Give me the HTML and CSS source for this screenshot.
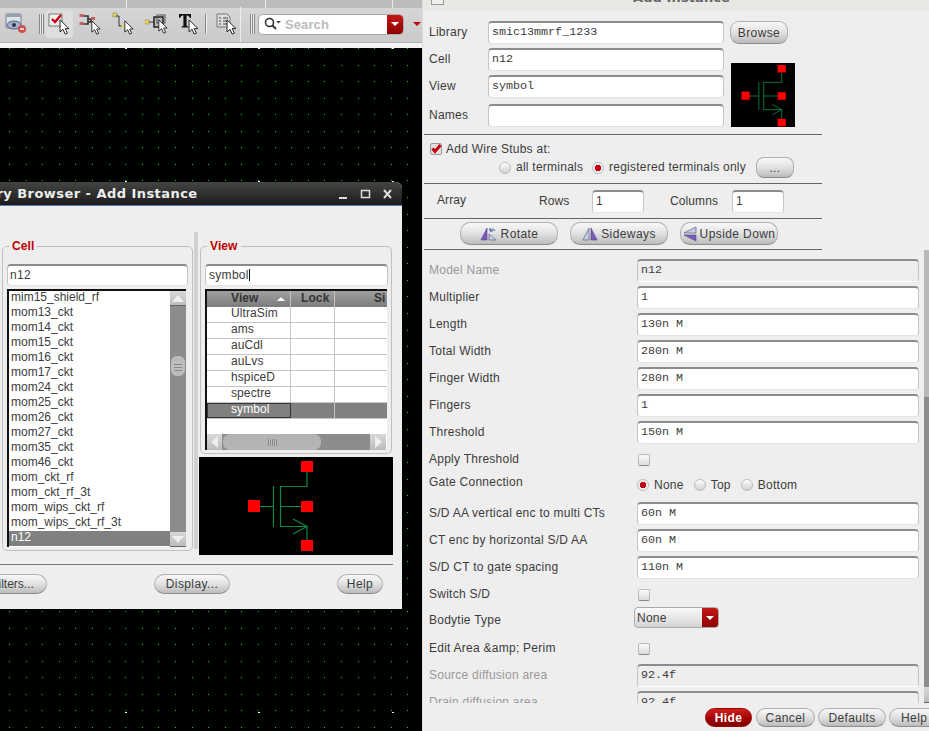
FILE: index.html
```html
<!DOCTYPE html>
<html lang="en">
<head>
  <meta charset="UTF-8" />
  <meta name="viewport" content="width=device-width, initial-scale=1.0" />
  <title>Add Instance</title>
  <link rel="stylesheet" href="styles.css">
</head>
<body>

  <svg class="defs" width="0" height="0">
    <symbol id="cursor" viewBox="0 0 12 18">
      <path d="M1 1V14.5L4.3 11.6L6.8 17L9.2 16L6.8 10.8H11Z" fill="#fff" stroke="#111" stroke-width="1"/>
    </symbol>
    <symbol id="mos" viewBox="0 0 66 91">
      <g fill="none" stroke="#0a8a48" stroke-width="1.2">
        <path d="M25.5 25V66M32.5 25V66"/>
        <path d="M32.5 25.5H59V11"/>
        <path d="M12 45.5H25.5M32.5 45.5H53"/>
        <path d="M32.5 65.5H59V79"/>
        <path d="M45 58L59 65.5L45 73"/>
      </g>
      <g fill="#f00">
        <rect x="53" y="0" width="12" height="11"/>
        <rect x="0" y="39" width="12" height="12"/>
        <rect x="53" y="40" width="12" height="11"/>
        <rect x="53" y="79" width="12" height="11"/>
      </g>
    </symbol>
    <symbol id="redcheck" viewBox="0 0 12 12">
      <rect x="0.5" y="0.5" width="11" height="11" rx="1.5" fill="#e0e0e0" stroke="#999"/>
      <path d="M2.500 5.500L5 8.500L10.500 2" fill="none" stroke="#cc0010" stroke-width="3"/>
    </symbol>
  </svg>

  <div class="toolbar-tops">
    <span class="top-seg"></span><span class="top-seg"></span><span class="top-seg"></span>
  </div>

  <div class="toolbar">
    <div class="tool tool-first">
      <svg width="22" height="22" viewBox="0 0 22 22">
        <rect x="1" y="1" width="15" height="14" rx="1" fill="#dfe3ea" stroke="#7b7f88"/>
        <rect x="1" y="1" width="15" height="3" fill="#9aa0ab"/>
        <ellipse cx="9" cy="12" rx="7" ry="4" fill="#9fb0d0" stroke="#56637d"/>
        <circle cx="9" cy="12" r="2" fill="#334"/>
        <circle cx="17" cy="16" r="4" fill="#d05050"/>
        <path d="M15 16H19" stroke="#fff" stroke-width="1.4"/>
      </svg>
    </div>
    <span class="grip grip-a"></span>
    <div class="tool tool-on">
      <svg class="tool-svg" width="24" height="24" viewBox="0 0 24 24">
        <rect x="1" y="2" width="13" height="12" fill="#eee" stroke="#777"/>
        <path d="M4 7L7 10L13 3" fill="none" stroke="#d00010" stroke-width="2.4"/>
        <use href="#cursor" x="11" y="7" width="11" height="16"/>
      </svg>
    </div>
    <div class="tool">
      <svg class="tool-svg" width="24" height="24" viewBox="0 0 24 24">
        <path d="M2 4H9V12H2M9 7H12V10H9" fill="none" stroke="#333" stroke-width="1.6"/>
        <rect x="0.5" y="2" width="4" height="3" fill="#c86060"/>
        <rect x="0.5" y="10" width="4" height="3" fill="#c86060"/>
        <rect x="12" y="5" width="4" height="3" fill="#c86060"/>
        <use href="#cursor" x="12" y="8" width="10" height="15"/>
      </svg>
    </div>
    <div class="tool">
      <svg class="tool-svg" width="24" height="24" viewBox="0 0 24 24">
        <rect x="1" y="1" width="4" height="4" fill="#e8d84a" stroke="#777" stroke-width=".5"/>
        <path d="M4 4H7V14H11" fill="none" stroke="#333"/>
        <rect x="9.500" y="13" width="3" height="3" fill="#e8d84a"/>
        <use href="#cursor" x="12" y="8" width="10" height="15"/>
      </svg>
    </div>
    <div class="tool">
      <svg class="tool-svg" width="24" height="24" viewBox="0 0 24 24">
        <rect x="0" y="8" width="4" height="4" fill="#e8d84a" stroke="#777" stroke-width=".5"/>
        <path d="M4 10H9" stroke="#333"/>
        <rect x="9" y="5" width="9" height="10" fill="#bbb" stroke="#222" stroke-width="1.5"/>
        <rect x="12" y="3" width="8" height="8" fill="none" stroke="#555"/>
        <use href="#cursor" x="13" y="7" width="10" height="15"/>
      </svg>
    </div>
    <div class="tool">
      <svg class="tool-svg" width="24" height="24" viewBox="0 0 24 24">
        <path d="M1 2H13V6H12C11 4 10 3.600 8.600 3.600V13C8.600 14 9 14.400 10.400 14.400V15.500H3.600V14.400C5 14.400 5.400 14 5.400 13V3.600C4 3.600 3 4 2 6H1Z" fill="#111"/>
        <use href="#cursor" x="10" y="7" width="11" height="16"/>
      </svg>
    </div>
    <span class="vsep"></span>
    <div class="tool">
      <svg class="tool-svg" width="24" height="24" viewBox="0 0 24 24">
        <path d="M1 2H11L14 5V15H1Z" fill="#ddd" stroke="#777"/>
        <path d="M3 6H5M7 6H12M3 9H5M7 9H12M3 12H5M7 12H12" stroke="#444"/>
        <use href="#cursor" x="10" y="7" width="11" height="16"/>
      </svg>
    </div>
    <span class="group-edge"></span>
    <span class="grip grip-b"></span>
    <div class="search">
      <svg width="18" height="14" viewBox="0 0 18 14">
        <circle cx="5.500" cy="5.500" r="4" fill="none" stroke="#333" stroke-width="1.6"/>
        <path d="M8.500 8.500L12 12" stroke="#333" stroke-width="2"/>
        <path d="M12 4H17L14.500 6.500Z" fill="#444"/>
      </svg>
      <span class="search-text">Search</span>
      <span class="search-drop"><i class="tri"></i></span>
    </div>
    <i class="tri tri-red"></i>
  </div>

  <div class="desktop">
    <svg class="grid-dots" width="929" height="683" shape-rendering="crispEdges">
      <path class="dots-minor" d="M0 .5H929M0 17.500H929M0 33.500H929M0 50.500H929M0 66.500H929M0 83.500H929M0 99.500H929M0 116.500H929M0 132.500H929M0 149.500H929M0 166.500H929M0 182.500H929M0 199.500H929M0 215.500H929M0 232.500H929M0 248.500H929M0 265.500H929M0 282.500H929M0 298.500H929M0 315.500H929M0 331.500H929M0 348.500H929M0 364.500H929M0 381.500H929M0 397.500H929M0 414.500H929M0 431.500H929M0 447.500H929M0 464.500H929M0 480.500H929M0 497.500H929M0 513.500H929M0 530.500H929M0 546.500H929M0 563.500H929M0 580.500H929M0 596.500H929M0 613.500H929M0 629.500H929M0 646.500H929M0 662.500H929M0 679.500H929"/>
      <path class="dots-major" d="M0 .5H929M0 133.500H929M0 664.500H929"/>
    </svg>
  </div>

  <!-- library browser window -->
  <div class="win browser">
    <div class="browser-title">
      <span class="browser-name">Library Browser - Add Instance</span>
      <svg class="win-controls" width="54" height="12" viewBox="0 0 54 12">
        <path d="M0 10H8" stroke="#ddd" stroke-width="2"/>
        <rect x="22.500" y="2.500" width="8" height="7" fill="none" stroke="#ddd" stroke-width="1.5"/>
        <path d="M45 2L52 10M52 2L45 10" stroke="#ddd" stroke-width="2"/>
      </svg>
    </div>
    <div class="panes">
      <fieldset class="group cell-group">
        <legend>Cell</legend>
        <input class="field sans" type="text" value="n12">
        <div class="listbox">
          <ul class="cell-list">
            <li>mim15_shield_rf</li>
            <li>mom13_ckt</li>
            <li>mom14_ckt</li>
            <li>mom15_ckt</li>
            <li>mom16_ckt</li>
            <li>mom17_ckt</li>
            <li>mom24_ckt</li>
            <li>mom25_ckt</li>
            <li>mom26_ckt</li>
            <li>mom27_ckt</li>
            <li>mom35_ckt</li>
            <li>mom46_ckt</li>
            <li>mom_ckt_rf</li>
            <li>mom_ckt_rf_3t</li>
            <li>mom_wips_ckt_rf</li>
            <li>mom_wips_ckt_rf_3t</li>
            <li class="sel">n12</li>
            <li>n12_3t</li>
          </ul>
          <div class="list-scroll">
            <span class="arrow-btn"><i class="tri tri-up"></i></span>
            <span class="v-thumb"></span>
            <span class="arrow-btn arrow-end"><i class="tri tri-down"></i></span>
          </div>
        </div>
      </fieldset>
      <span class="sash"></span>
      <div class="view-col">
        <fieldset class="group view-group">
          <legend>View</legend>
          <div class="field sans view-field">symbol<i class="caret"></i></div>
          <div class="tablebox">
            <div class="tr th">
              <span class="c1">View<i class="tri tri-sort"></i></span><span class="c2">Lock</span><span class="c3">Si</span>
            </div>
            <div class="tr"><span class="c1">UltraSim</span><span class="c2"></span><span class="c3"></span></div>
            <div class="tr"><span class="c1">ams</span><span class="c2"></span><span class="c3"></span></div>
            <div class="tr"><span class="c1">auCdl</span><span class="c2"></span><span class="c3"></span></div>
            <div class="tr"><span class="c1">auLvs</span><span class="c2"></span><span class="c3"></span></div>
            <div class="tr"><span class="c1">hspiceD</span><span class="c2"></span><span class="c3"></span></div>
            <div class="tr"><span class="c1">spectre</span><span class="c2"></span><span class="c3"></span></div>
            <div class="tr tr-sel"><span class="c1">symbol</span><span class="c2"></span><span class="c3"></span></div>
            <div class="table-fill"></div>
            <div class="h-scroll">
              <span class="arrow-btn"><i class="tri tri-left"></i></span>
              <span class="h-thumb"></span>
              <span class="arrow-btn arrow-last"><i class="tri tri-right"></i></span>
            </div>
          </div>
        </fieldset>
        <div class="preview">
          <svg width="66" height="91"><use href="#mos"/></svg>
        </div>
      </div>
    </div>
    <div class="browser-foot">
      <button class="btn btn-filters">Filters...</button>
      <button class="btn btn-display">Display...</button>
      <button class="btn btn-help">Help</button>
    </div>
  </div>

  <!-- add instance form -->
  <div class="win add">
    <div class="add-title">
      <span class="add-icon"></span>
      <span class="add-name">Add Instance</span>
    </div>

    <div class="sect top-sect">
      <label class="lbl">Library</label>
      <input class="field mono" type="text" value="smic13mmrf_1233">
      <button class="btn btn-browse">Browse</button>
      <label class="lbl">Cell</label>
      <input class="field mono" type="text" value="n12">
      <div class="mini-preview">
        <svg width="46" height="62"><use href="#mos"/></svg>
      </div>
      <label class="lbl">View</label>
      <input class="field mono" type="text" value="symbol">
      <label class="lbl lbl-names">Names</label>
      <input class="field mono field-names" type="text">
    </div>

    <div class="sect stubs-sect">
      <div class="stubs-head">
        <svg class="chk" width="12" height="12"><use href="#redcheck"/></svg>
        <span>Add Wire Stubs at:</span>
      </div>
      <div class="stubs-opts">
        <span class="radio"></span><span class="opt-all">all terminals</span>
        <span class="radio radio-on"></span><span class="opt-reg">registered terminals only</span>
        <button class="btn btn-more">...</button>
      </div>
    </div>

    <div class="sect array-sect">
      <span class="array-name">Array</span>
      <span class="rows-lbl">Rows</span>
      <input class="field sans field-num" type="text" value="1">
      <span class="cols-lbl">Columns</span>
      <input class="field sans field-num" type="text" value="1">
    </div>

    <div class="sect flip-sect">
      <button class="btn btn-flip">
        <svg width="18" height="14" viewBox="0 0 18 14"><path d="M7 1V13H1Z" fill="#7a5cb8" stroke="#54408c" stroke-width=".6"/><path d="M9 13V7L16 13Z" fill="#c8d0e4" stroke="#66708c" stroke-width=".8"/><path d="M10 4C11 1.500 14 1.500 15 4M10 1V4H13" fill="none" stroke="#2a5a9a"/></svg>
        Rotate
      </button>
      <button class="btn btn-flip">
        <svg width="16" height="14" viewBox="0 0 16 14"><path d="M7 1V13H1Z" fill="#c8d0e4" stroke="#66708c" stroke-width=".8"/><path d="M9 1V13H15Z" fill="#7a5cb8" stroke="#54408c" stroke-width=".6"/></svg>
        Sideways
      </button>
      <button class="btn btn-flip">
        <svg width="14" height="16" viewBox="0 0 14 16"><path d="M1 7H13V1Z" fill="#c8d0e4" stroke="#66708c" stroke-width=".8"/><path d="M1 9H13V15Z" fill="#7a5cb8" stroke="#54408c" stroke-width=".6"/></svg>
        Upside Down
      </button>
    </div>

    <div class="form-wrap">
      <div class="form">
        <label class="lbl off">Model Name</label><input class="field mono field-off" type="text" value="n12">
        <label class="lbl">Multiplier</label><input class="field mono" type="text" value="1">
        <label class="lbl">Length</label><input class="field mono" type="text" value="130n M">
        <label class="lbl">Total Width</label><input class="field mono" type="text" value="280n M">
        <label class="lbl">Finger Width</label><input class="field mono" type="text" value="280n M">
        <label class="lbl">Fingers</label><input class="field mono" type="text" value="1">
        <label class="lbl">Threshold</label><input class="field mono" type="text" value="150n M">
        <label class="lbl">Apply Threshold</label><div class="cell-ctl"><span class="box"></span></div>
        <label class="lbl lbl-up">Gate Connection</label>
        <div class="cell-ctl gate-opts">
          <span class="radio radio-on"></span><span>None</span>
          <span class="radio"></span><span>Top</span>
          <span class="radio"></span><span>Bottom</span>
        </div>
        <label class="lbl">S/D AA vertical enc to multi CTs</label><input class="field mono" type="text" value="60n M">
        <label class="lbl">CT enc by horizontal S/D AA</label><input class="field mono" type="text" value="60n M">
        <label class="lbl">S/D CT to gate spacing</label><input class="field mono" type="text" value="110n M">
        <label class="lbl">Switch S/D</label><div class="cell-ctl"><span class="box"></span></div>
        <label class="lbl lbl-body">Bodytie Type</label>
        <div class="select"><span>None</span><span class="select-drop"><i class="tri"></i></span></div>
        <label class="lbl">Edit Area &amp;amp; Perim</label><div class="cell-ctl"><span class="box"></span></div>
        <label class="lbl off">Source diffusion area</label><input class="field mono field-off" type="text" value="92.4f">
        <label class="lbl off">Drain diffusion area</label><input class="field mono field-off" type="text" value="92.4f">
      </div>
      <div class="v-scroll">
        <span class="v-scroll-thumb"></span>
        <span class="arrow-btn"></span>
      </div>
    </div>

    <div class="add-foot">
      <button class="btn btn-hide">Hide</button>
      <button class="btn btn-cancel">Cancel</button>
      <button class="btn btn-defaults">Defaults</button>
      <button class="btn btn-help2">Help</button>
    </div>
  </div>

</body>
</html>
```

FILE: styles.css
```css
* {
  box-sizing: border-box;
}

body {
  margin: 0;
  width: 929px;
  height: 731px;
  overflow: hidden;
  position: relative;
  display: flex;
  flex-direction: column;
  background-color: #000;
  font-family: "Liberation Sans", Arial, sans-serif;
  font-size: 12px;
  letter-spacing: 0.1px;
  color: #3c3c3c;
}

.defs {
  position: absolute;
}

/* top toolbar */
.toolbar-tops {
  height: 8px;
  display: flex;
  background-color: #bcbcbc;
  flex-shrink: 0;
}

.top-seg {
  width: 127px;
  border-right: 1px solid #e8e8e8;
}

.top-seg:nth-child(2) {
  width: 139px;
}

.toolbar {
  height: 35px;
  flex-shrink: 0;
  display: flex;
  align-items: center;
  background: linear-gradient(#d6d6d6, #cacaca);
  padding-left: 5px;
  padding-bottom: 2px;
  position: relative;
  border-bottom: 1px solid #b0b0b0;
  box-shadow: 0 5px 0 #f4f4f4;
  z-index: 1;
}

.tool {
  width: 28px;
  height: 28px;
  display: flex;
  align-items: center;
  justify-content: center;
  margin-right: 5px;
}

.tool-svg {
  margin-left: -2px;
}

.tool-first {
  width: 22px;
  margin-right: 0;
}

.tool-on {
  background-color: #dedede;
  border-radius: 4px;
}

.tool-on .tool-svg {
  margin-left: 2px;
}

.grip {
  width: 5px;
  height: 20px;
  border-left: 1px solid #888;
  border-right: 1px solid #888;
  margin-left: 12px;
  margin-right: 1px;
  background: linear-gradient(to right, #eee 0 1px, #888 1px 2px, #eee 2px);
}

.grip-a {
  margin-right: 1px;
}

.vsep {
  width: 2px;
  height: 20px;
  margin: 0 8px 0 -5px;
  background: linear-gradient(to right, #888 1px, #eee 1px);
}

.group-edge {
  width: 1px;
  height: 35px;
  margin-left: -8px;
  background-color: #eee;
}

.grip-b {
  margin-left: 9px;
  margin-right: 3px;
}

.search {
  width: 146px;
  height: 21px;
  display: flex;
  align-items: center;
  padding-left: 5px;
  background-color: #fff;
  border: 1px solid #aaa;
  border-radius: 5px;
  overflow: hidden;
}

.search-text {
  margin-left: 3px;
  font-size: 13px;
  font-weight: bold;
  color: #bbb;
  flex: 1;
}

.search-drop,
.select-drop {
  width: 16px;
  height: 100%;
  display: flex;
  align-items: center;
  justify-content: center;
  background: linear-gradient(#c41818, #8e0000);
}

.tri {
  width: 0;
  height: 0;
  display: block;
  border-left: 4px solid transparent;
  border-right: 4px solid transparent;
  border-top: 4px solid #fff;
}

.tri-red {
  margin-left: 9px;
  border-top-color: #c00010;
}

.tri-up {
  border-top: 0;
  border-bottom: 7px solid #eee;
  border-left-width: 6px;
  border-right-width: 6px;
}

.tri-down {
  border-top: 7px solid #eee;
  border-left-width: 6px;
  border-right-width: 6px;
}

.tri-left {
  border-top: 6px solid transparent;
  border-bottom: 6px solid transparent;
  border-left: 0;
  border-right: 7px solid #eee;
}

.tri-right {
  border-top: 6px solid transparent;
  border-bottom: 6px solid transparent;
  border-right: 0;
  border-left: 7px solid #eee;
}

.tri-sort {
  display: inline-block;
  position: absolute;
  left: 70px;
  top: 6px;
  border-top: 0;
  border-bottom: 4px solid #fff;
}

/* desktop */
.desktop {
  flex: 1;
  position: relative;
  margin-top: 5px;
}

.grid-dots {
  position: absolute;
  left: 0;
  top: 0;
}

.dots-minor {
  fill: none;
  stroke: #00e000;
  stroke-dasharray: 1 15.6;
  stroke-dashoffset: -9;
}

.dots-major {
  fill: none;
  stroke: #fff;
  stroke-dasharray: 2 131.3;
  stroke-dashoffset: -125;
}

.win {
  position: absolute;
  z-index: 2;
  background-color: #eee;
}

/* library browser */
.browser {
  left: 0;
  top: 182px;
  width: 402px;
  height: 427px;
  border-top-right-radius: 6px;
  overflow: hidden;
}

.browser-title {
  height: 24px;
  display: flex;
  align-items: center;
  justify-content: space-between;
  padding-right: 9px;
  background: linear-gradient(#444, #1c1c1c);
  border-bottom: 1px solid #5a7ca8;
  color: #eee;
  font-family: "DejaVu Sans", sans-serif;
  font-weight: bold;
  font-size: 13px;
  letter-spacing: 0.45px;
  white-space: nowrap;
}

.browser-name {
  margin-left: -43px;
}

.panes {
  display: flex;
  padding: 33px 9px 0 2px;
  height: 350px;
}

.group {
  margin: 0;
  padding: 0 4px;
  border: 1px solid #c0c0c0;
  border-radius: 5px;
  min-width: 0;
}

.group legend {
  padding: 0 3px;
  margin-left: 2px;
  color: #c00000;
  font-weight: bold;
  line-height: 14px;
}

.cell-group {
  width: 191px;
  height: 312px;
  margin-top: 0;
  flex-shrink: 0;
}

.field {
  display: block;
  height: 23px;
  width: 100%;
  padding: 0 3px 2px;
  background-color: #fff;
  border: 1px solid #e4e4e4;
  border-top: 2px solid #8c8c8c;
  border-left-color: #c4c4c4;
  border-right-color: #c4c4c4;
  border-radius: 4px;
  color: #3c3c3c;
  outline: none;
  letter-spacing: inherit;
}

.sans {
  font-family: "Liberation Sans", Arial, sans-serif;
  font-size: 12px;
  letter-spacing: 0.3px;
}

.mono {
  font-family: "Liberation Mono", monospace;
  font-size: 11.7px;
  letter-spacing: 0;
}

.cell-group .field {
  margin-top: 11px;
  height: 22px;
  width: 181px;
  padding-left: 2px;
}

.listbox {
  margin-top: 3px;
  width: 179px;
  height: 258px;
  display: flex;
  background-color: #fff;
  border-top: 2px solid #111;
  border-left: 2px solid #111;
  overflow: hidden;
}

.cell-list {
  list-style: none;
  margin: 0;
  padding: 0;
  flex: 1;
  overflow: hidden;
}

.cell-list li {
  height: 15px;
  line-height: 12px;
  padding-left: 2px;
  letter-spacing: 0;
}

.cell-list .sel {
  background-color: #808080;
  color: #fff;
}

.list-scroll {
  width: 16px;
  display: flex;
  flex-direction: column;
  align-items: center;
  background-color: #8c8c8c;
}

.arrow-btn {
  width: 16px;
  height: 15px;
  flex-shrink: 0;
  display: flex;
  align-items: center;
  justify-content: center;
  background: linear-gradient(#d8d8d8, #bcbcbc);
  border-bottom: 1px solid #666;
}

.v-thumb {
  width: 14px;
  height: 20px;
  margin-top: 50px;
  border-radius: 6px;
  background: repeating-linear-gradient(#c0c0c0 0 2px, #888 2px 3px) center / 8px 9px no-repeat, #bcbcbc;
}

.arrow-end {
  margin-top: auto;
}

.sash {
  width: 4px;
  height: 317px;
  margin: -7px 3px 0 1px;
  background-color: #d0d0d0;
  flex-shrink: 0;
}

.view-col {
  width: 194px;
  flex-shrink: 0;
  margin-left: -2px;
}

.view-group {
  width: 192px;
  height: 215px;
  margin-left: 1px;
}

.view-field {
  margin-top: 11px;
  height: 22px;
  width: 183px;
  line-height: 18px;
}

.caret {
  display: inline-block;
  width: 1px;
  height: 12px;
  vertical-align: -2px;
  background-color: #111;
}

.tablebox {
  margin-top: 3px;
  width: 182px;
  height: 161px;
  background-color: #fff;
  border-top: 2px solid #111;
  border-left: 2px solid #111;
  display: flex;
  flex-direction: column;
  overflow: hidden;
}

.tr {
  display: flex;
  height: 16px;
  line-height: 12px;
  flex-shrink: 0;
  border-bottom: 1px solid #c4c4c4;
}

.tr span {
  border-right: 1px solid #c4c4c4;
  display: block;
  position: relative;
  overflow: hidden;
}

.c1 {
  width: 84px;
  padding-left: 24px;
}

.c2 {
  width: 44px;
  padding-left: 10px;
}

.c3 {
  flex: 1;
  padding-left: 39px;
  border-right: 0 !important;
}

.th {
  height: 16px;
  border-bottom: 0;
  background: linear-gradient(#a0a0a0, #7c7c7c);
  font-weight: bold;
  color: #333;
  line-height: 15px;
}

.tr-sel {
  background-color: #808080;
  color: #fff;
}

.tr-sel .c1 {
  outline: 1px solid #333;
  outline-offset: -1px;
}

.table-fill {
  flex: 1;
}

.h-scroll {
  height: 16px;
  margin: 0 1px 0 0;
  display: flex;
  background-color: #8c8c8c;
}

.h-scroll .arrow-btn {
  width: 15px;
  height: 16px;
  border-bottom: 0;
}

.h-scroll .arrow-last {
  margin-left: auto;
  width: 16px;
}

.h-thumb {
  width: 98px;
  margin-left: 1px;
  border-radius: 7px;
  background: repeating-linear-gradient(to right, #888 0 1px, #c0c0c0 1px 2px) center / 9px 7px no-repeat, #b4b4b4;
}

.preview {
  margin-top: 3px;
  width: 194px;
  height: 98px;
  background-color: #000;
  padding: 4px 0 0 49px;
}

.browser-foot {
  margin: 8px 9px 0 0;
  width: 393px;
  padding-top: 9px;
  border-top: 1px solid #777;
  display: flex;
  align-items: center;
  position: relative;
}

.btn {
  height: 20px;
  padding: 0;
  background: linear-gradient(#f8f8f8, #e4e4e4 45%, #bcbcbc);
  border: 1px solid #b0b0b0;
  border-bottom-color: #8c8c8c;
  border-radius: 10px;
  font-family: "Liberation Sans", Arial, sans-serif;
  font-size: 12px;
  letter-spacing: 0.4px;
  color: #3c3c3c;
  white-space: nowrap;
  flex-shrink: 0;
}

.btn-filters {
  width: 70px;
  margin-left: -23px;
  padding-left: 1px;
  letter-spacing: 0;
}

.btn-display {
  width: 76px;
  margin-left: 107px;
}

.btn-help {
  width: 46px;
  margin-left: 107px;
}

/* add instance */
.add {
  left: 422px;
  top: 0;
  width: 507px;
  height: 731px;
  display: flex;
  flex-direction: column;
  border-left: 1px solid #ddd;
  overflow: hidden;
}

.add-title {
  height: 11px;
  flex-shrink: 0;
  display: flex;
  position: relative;
  background-color: #e8e8e4;
  overflow: hidden;
}

.add-icon {
  width: 13px;
  height: 5px;
  margin-left: 8px;
  border: 1px solid #999;
  border-top: 0;
  background-color: #eee;
}

.add-name {
  margin-left: 189px;
  margin-top: -10px;
  font-family: "DejaVu Sans", sans-serif;
  font-size: 13px;
  font-weight: bold;
  color: #666;
  line-height: 16px;
}

.sect {
  margin-left: 1px;
  width: 398px;
  border-bottom: 1px solid #666;
  flex-shrink: 0;
}

.top-sect {
  display: grid;
  grid-template-columns: 59px 236px auto;
  grid-template-rows: 23px 23px 23px 23px;
  row-gap: 4px;
  align-items: center;
  padding: 10px 0 6px 5px;
  height: 124px;
}

.lbl {
  letter-spacing: 0.25px;
  white-space: nowrap;
  padding-bottom: 2px;
}

.off {
  color: #999;
}

.lbl-up {
  margin-top: -8px;
}

.lbl-body {
  padding-bottom: 4px;
}

.lbl-names,
.field-names {
  position: relative;
  top: 2px;
}

.btn-browse {
  width: 58px;
  height: 23px;
  margin-left: 6px;
  border-radius: 9px;
}

.mini-preview {
  grid-row: 2 / 5;
  grid-column: 3;
  width: 64px;
  height: 64px;
  margin: 15px 0 0 7px;
  padding: 2px 0 0 10px;
  background-color: #000;
  align-self: start;
}

.stubs-sect {
  height: 49px;
  padding: 7px 0 0 6px;
}

.stubs-head {
  display: flex;
  align-items: center;
  gap: 4px;
  height: 14px;
  letter-spacing: 0.25px;
}

.stubs-opts {
  display: flex;
  align-items: center;
  height: 21px;
  margin-top: 1px;
  padding-left: 69px;
  letter-spacing: 0.25px;
}

.opt-all,
.opt-reg {
  padding-bottom: 2px;
}

.radio {
  width: 12px;
  height: 12px;
  flex-shrink: 0;
  display: inline-block;
  border-radius: 50%;
  border: 1px solid #bbb;
  background: linear-gradient(#fff, #d0d0d0);
}

.radio-on {
  background: radial-gradient(circle, #c00010 0 3px, #eee 3.5px);
}

.opt-all {
  margin-left: 5px;
  width: 76px;
}

.opt-reg {
  margin-left: 5px;
  width: 147px;
}

.btn-more {
  width: 38px;
  height: 21px;
  border-radius: 8px;
}

.array-sect {
  height: 35px;
  display: flex;
  align-items: center;
  padding-left: 13px;
}

.array-name {
  width: 102px;
  margin-top: -2px;
}

.rows-lbl {
  width: 53px;
  padding-bottom: 1px;
}

.field-num {
  width: 52px;
}

.cols-lbl {
  width: 62px;
  margin-left: 26px;
  padding-bottom: 1px;
}

.flip-sect {
  height: 31px;
  display: flex;
  gap: 12px;
  padding: 3px 0 0 36px;
}

.btn-flip {
  width: 98px;
  height: 23px;
  display: flex;
  align-items: center;
  justify-content: center;
  gap: 3px;
}

.form-wrap {
  flex: 1;
  min-height: 0;
  display: flex;
  overflow: hidden;
}

.form {
  width: 502px;
  padding: 9px 0 0 6px;
  display: grid;
  grid-template-columns: 208px 282px;
  grid-auto-rows: 23px;
  row-gap: 4px;
  align-items: center;
}

.field-off {
  background-color: #eee;
}

.form .field-off {
  border-bottom-color: #fff;
}

.cell-ctl {
  display: flex;
  align-items: center;
  padding-left: 1px;
}

.box {
  width: 12px;
  height: 12px;
  border: 1px solid #bbb;
  border-bottom-color: #888;
  border-radius: 2px;
  background: linear-gradient(#fafafa, #dcdcdc);
}

.gate-opts {
  gap: 5px;
  margin-top: -3px;
  padding-left: 0;
  letter-spacing: 0.25px;
}

.gate-opts .radio + span + .radio {
  margin-left: 5px;
}

.select {
  width: 85px;
  height: 21px;
  margin: -8px 0 0 -3px;
  display: flex;
  align-items: center;
  justify-content: space-between;
  padding-left: 2px;
  background: linear-gradient(#fafafa, #d4d4d4);
  border: 1px solid #aaa;
  border-radius: 4px;
  overflow: hidden;
  letter-spacing: 0.25px;
}

.v-scroll {
  width: 5px;
  display: flex;
  flex-direction: column;
  background-color: #8c8c8c;
  margin-top: -236px;
  position: relative;
  z-index: 1;
}

.v-scroll-thumb {
  height: 368px;
  margin-top: 15px;
  background-color: #b8b8b8;
  border-top: 1px solid #666;
}

.v-scroll .arrow-btn {
  margin-top: auto;
  height: 16px;
}

.add-foot {
  height: 28px;
  flex-shrink: 0;
  display: flex;
  align-items: center;
  gap: 3px;
  padding: 1px 0 0 282px;
  background-color: #eee;
}

.add-foot .btn {
  height: 19px;
}

.btn-hide {
  width: 47px;
  margin-right: 1px;
  background: linear-gradient(#d02020, #a00000 60%, #800000);
  border-color: #900;
  color: #fff;
  font-weight: bold;
}

.btn-cancel {
  width: 59px;
}

.btn-defaults {
  width: 68px;
}

.btn-help2 {
  width: 60px;
  text-align: left;
  padding-left: 11px;
}
```
